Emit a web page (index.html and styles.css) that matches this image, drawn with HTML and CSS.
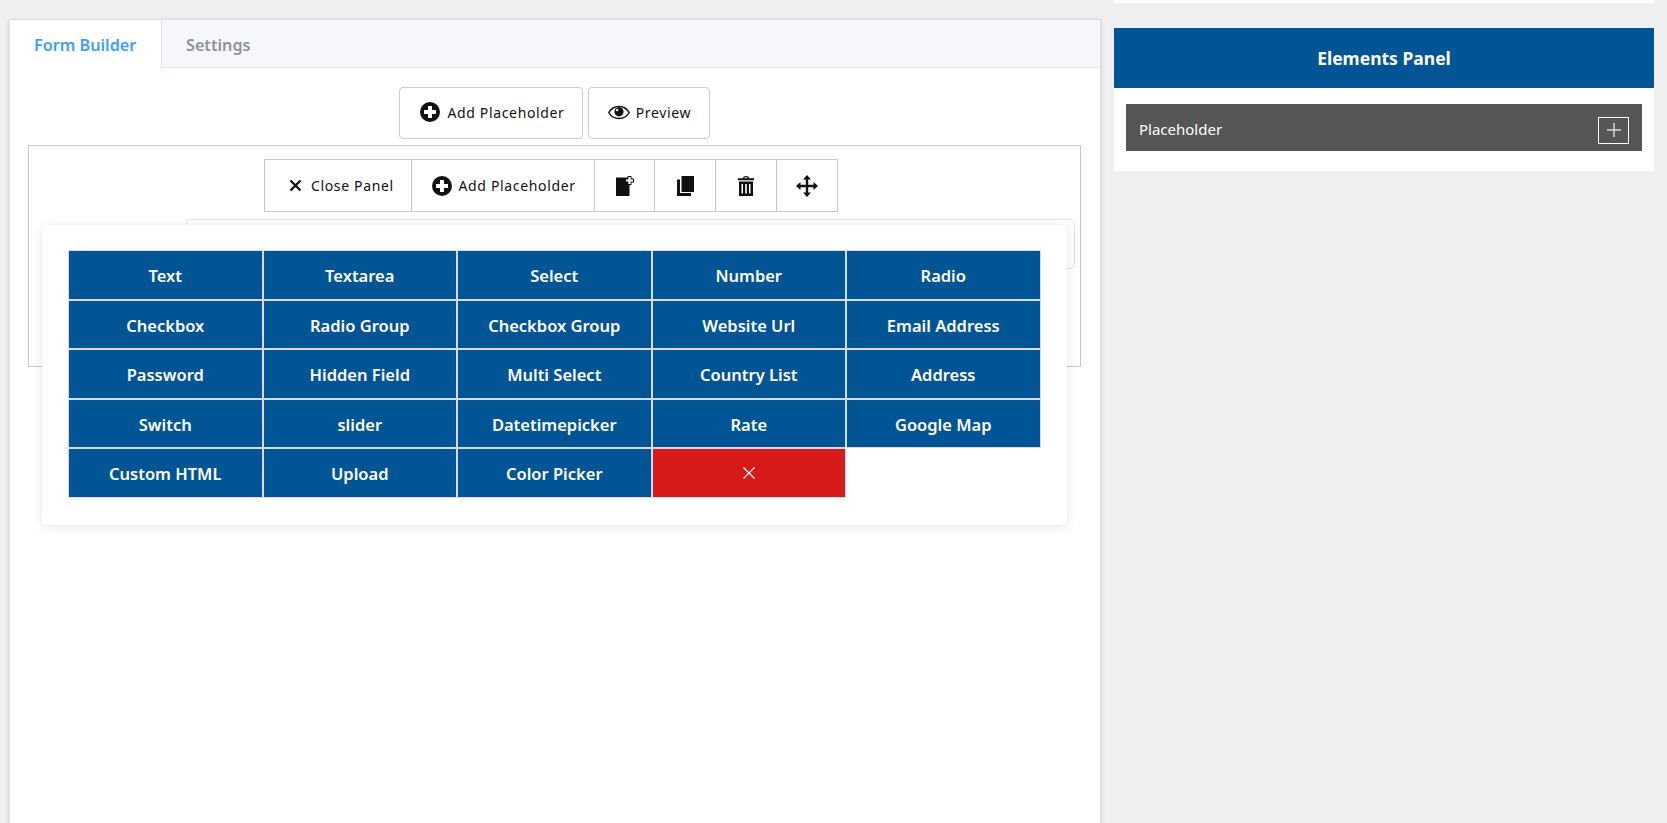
FILE: index.html
```html
<!DOCTYPE html>
<html lang="en">
<head>
<meta charset="utf-8">
<title>Form Builder</title>
<link rel="stylesheet" href="styles.css">
</head>
<body>
<div class="page">
  <main class="card">
    <div class="tabs">
      <div class="tab active">Form Builder</div>
      <div class="tab">Settings</div>
    </div>
    <div class="card-body">
      <div class="actions">
        <button class="btn btn-add">
          <svg class="ic20" viewBox="0 0 20 20"><path fill-rule="evenodd" d="M10 0a10 10 0 1 0 0 20a10 10 0 0 0 0-20zM8 4h4v4h4v4h-4v4H8v-4H4V8h4z"/></svg>
          Add Placeholder
        </button>
        <button class="btn btn-preview">
          <svg class="ic-eye" viewBox="0 0 22 15"><path d="M11 1.500C6 1.500 2.500 4.500.8 7.500c1.700 3 5.200 6 10.200 6s8.500-3 10.200-6c-1.700-3-5.200-6-10.200-6z" fill="none" stroke="#111" stroke-width="1.500"/><circle cx="11" cy="6.800" r="4.600" fill="#111"/><circle cx="9.200" cy="5" r="1.200" fill="#fff"/></svg>
          Preview
        </button>
      </div>
      <section class="box">
        <div class="toolbar">
          <div class="cell cell-close">
            <svg class="ic-x" viewBox="0 0 13 13"><path d="M1.500 1.500l10 10M11.500 1.500l-10 10" stroke="#111" stroke-width="2.300" fill="none"/></svg>
            Close Panel
          </div>
          <div class="cell cell-add">
            <svg class="ic20" viewBox="0 0 20 20"><path fill-rule="evenodd" d="M10 0a10 10 0 1 0 0 20a10 10 0 0 0 0-20zM8 4h4v4h4v4h-4v4H8v-4H4V8h4z"/></svg>
            Add Placeholder
          </div>
          <div class="cell cell-icon cell-w60">
            <svg class="ic-file" viewBox="0 0 18 20"><path d="M0 1.500h13.500V20H0z" fill="#111"/><path d="M13.500 0v9M9 4.500h9" stroke="#111" stroke-width="4" fill="none"/><path d="M13.500 1v7M10 4.500h7" stroke="#fff" stroke-width="2.200" fill="none"/></svg>
          </div>
          <div class="cell cell-icon">
            <svg class="ic-copy" viewBox="0 0 17 20"><path d="M4.500 0H17v16H4.500z" fill="#111"/><path d="M0 3.500h3V17h11v3H0z" fill="#111"/></svg>
          </div>
          <div class="cell cell-icon">
            <svg class="ic-trash" viewBox="0 0 16 20"><path fill-rule="evenodd" d="M5 2.200C5 .8 6 0 8 0s3 .8 3 2.200h5v2H0v-2zM6.300 2.200h3.400C9.600 1.500 9 1.200 8 1.200s-1.600.3-1.700 1zM1 5.500h14V20H1zM3.500 8v9.500H5V8zM7.200 8v9.500h1.600V8zM11 8v9.500h1.500V8z" fill="#111"/></svg>
          </div>
          <div class="cell cell-icon">
            <svg class="ic-move" viewBox="0 0 22 22"><path d="M11 0l4 4.500h-2.800v5.300h5.300V7l4.500 4-4.500 4v-2.800h-5.300v5.300H15L11 22l-4-4.500h2.800v-5.300H4.500V15L0 11l4.500-4v2.800h5.300V4.500H7z" fill="#111"/></svg>
          </div>
        </div>
        <div class="inner"></div>
      </section>
    </div>
    <div class="popup">
      <div class="grid">
        <div class="item">Text</div>
        <div class="item">Textarea</div>
        <div class="item">Select</div>
        <div class="item">Number</div>
        <div class="item">Radio</div>
        <div class="item">Checkbox</div>
        <div class="item">Radio Group</div>
        <div class="item">Checkbox Group</div>
        <div class="item">Website Url</div>
        <div class="item">Email Address</div>
        <div class="item">Password</div>
        <div class="item">Hidden Field</div>
        <div class="item">Multi Select</div>
        <div class="item">Country List</div>
        <div class="item">Address</div>
        <div class="item">Switch</div>
        <div class="item">slider</div>
        <div class="item">Datetimepicker</div>
        <div class="item">Rate</div>
        <div class="item">Google Map</div>
        <div class="item">Custom HTML</div>
        <div class="item">Upload</div>
        <div class="item">Color Picker</div>
        <div class="item item-close">
          <svg class="ic-close" viewBox="0 0 12 12"><path d="M.5.500l11 11M11.500.500l-11 11" stroke="#fff" stroke-width="1.200" fill="none"/></svg>
        </div>
      </div>
    </div>
  </main>
  <aside class="side">
    <div class="side-top"></div>
    <div class="panel">
      <h2 class="panel-title">Elements Panel</h2>
      <div class="panel-body">
        <div class="group">
          <span class="group-name">Placeholder</span>
          <span class="group-add"><svg class="ic-plus" viewBox="0 0 14 14"><path d="M7 0v14M0 7h14" stroke="#d8d8d8" stroke-width="1.500" fill="none"/></svg></span>
        </div>
      </div>
    </div>
  </aside>
</div>
</body>
</html>
```

FILE: styles.css
```css
* { box-sizing: border-box; }
html, body { margin: 0; height: 100%; overflow: hidden; }
body { background: #f0f0f0; font-family: "Noto Sans", "Open Sans", sans-serif; color: #111; }

.page { display: flex; align-items: flex-start; padding-left: 9px; }

.card {
  position: relative;
  width: 1092px;
  height: 900px;
  margin-top: 19px;
  background: #fff;
  border: 1px solid #dcdfe6;
  box-shadow: 0 2px 4px rgba(0,0,0,.12), 0 0 6px rgba(0,0,0,.04);
}
.tabs { display: flex; height: 48px; background: #f5f7fa; border-bottom: 1px solid #e4e7ed; }
.tab { padding: 0 24px 0 24px; line-height: 50px; font-size: 16.200px; font-weight: 600; color: #909399; }
.tab.active { width: 152px; background: #fff; color: #409eff; border-right: 1px solid #dcdfe6; height: 48px; }

.card-body { padding: 19px 19px 0 18px; }
.actions { display: flex; justify-content: center; gap: 5px; padding-right: 1px; }
.btn {
  display: flex; align-items: center; justify-content: center;
  height: 52px; padding: 0 0 2px;
  background: #fff; border: 1px solid #ccc; border-radius: 4px;
  font: 14px "Noto Sans", sans-serif; letter-spacing: .65px; color: #111;
}
.btn-add { width: 184px; gap: 7px; padding-left: 4px; }
.btn-preview { width: 122px; gap: 6px; padding-left: 2px; }
.ic20 { width: 20px; height: 20px; fill: #111; }
.ic-eye { width: 22px; height: 15px; }

.box { height: 222px; margin-top: 6px; border: 1px solid #c8c8c8; padding: 13px 5px 0 0; }
.toolbar { display: flex; width: 574px; height: 53px; margin-left: 235px; border: 1px solid #c8c8c8; }
.cell { display: flex; align-items: center; justify-content: center; border-left: 1px solid #c8c8c8; font-size: 14px; letter-spacing: .65px; height: 100%; }
.cell:first-child { border-left: 0; }
.cell-close { width: 146px; gap: 9px; padding-left: 7px; }
.cell-add { width: 184px; gap: 7px; padding-left: 1px; }
.cell-icon { width: 61px; }
.cell-w60 { width: 60px; }
.ic-x { width: 13px; height: 13px; }
.ic-file { width: 18px; height: 20px; }
.ic-copy { width: 17px; height: 20px; }
.ic-trash { width: 16px; height: 20px; }
.ic-move { width: 22px; height: 22px; }

.inner { height: 50px; margin: 7px 0 0 157px; border: 1px solid #e4e4e4; border-radius: 5px; }

.popup {
  position: absolute; left: 32px; top: 205px;
  width: 1025px; height: 300px; padding: 25px 26px 0;
  background: #fff; border-radius: 5px;
  box-shadow: 0 2px 12px rgba(0,0,0,.1);
}
.grid { display: grid; grid-template-columns: repeat(5, 194.500px); grid-auto-rows: 49.500px; }
.item {
  display: flex; align-items: center; justify-content: center;
  padding-top: 2px;
  background: #025594; border: 1px solid #d8dce2;
  color: #fff; font-size: 16.500px; font-weight: 600;
}
.item-close { background: #d71a1a; border-color: #c6dcf0; padding-top: 0; }
.ic-close { width: 12px; height: 12px; }

.side { width: 540px; margin-left: 13px; }
.side-top { height: 3px; background: #fff; }
.panel { margin-top: 25px; background: #fff; }
.panel-title { margin: 0; height: 60px; line-height: 60px; text-align: center; background: #025594; color: #fff; font-size: 17.500px; font-weight: 700; }
.panel-body { padding: 16px 12px 20px; }
.group { display: flex; align-items: center; justify-content: space-between; height: 47px; padding: 0 13px 0 13px; background: #565656; color: #fff; font-size: 15px; }
.group-name { padding-top: 2px; }
.group-add { display: flex; align-items: center; justify-content: center; width: 31px; height: 27px; margin-top: 5px; border: 1px solid #fff; }
.ic-plus { width: 14px; height: 14px; }
```
